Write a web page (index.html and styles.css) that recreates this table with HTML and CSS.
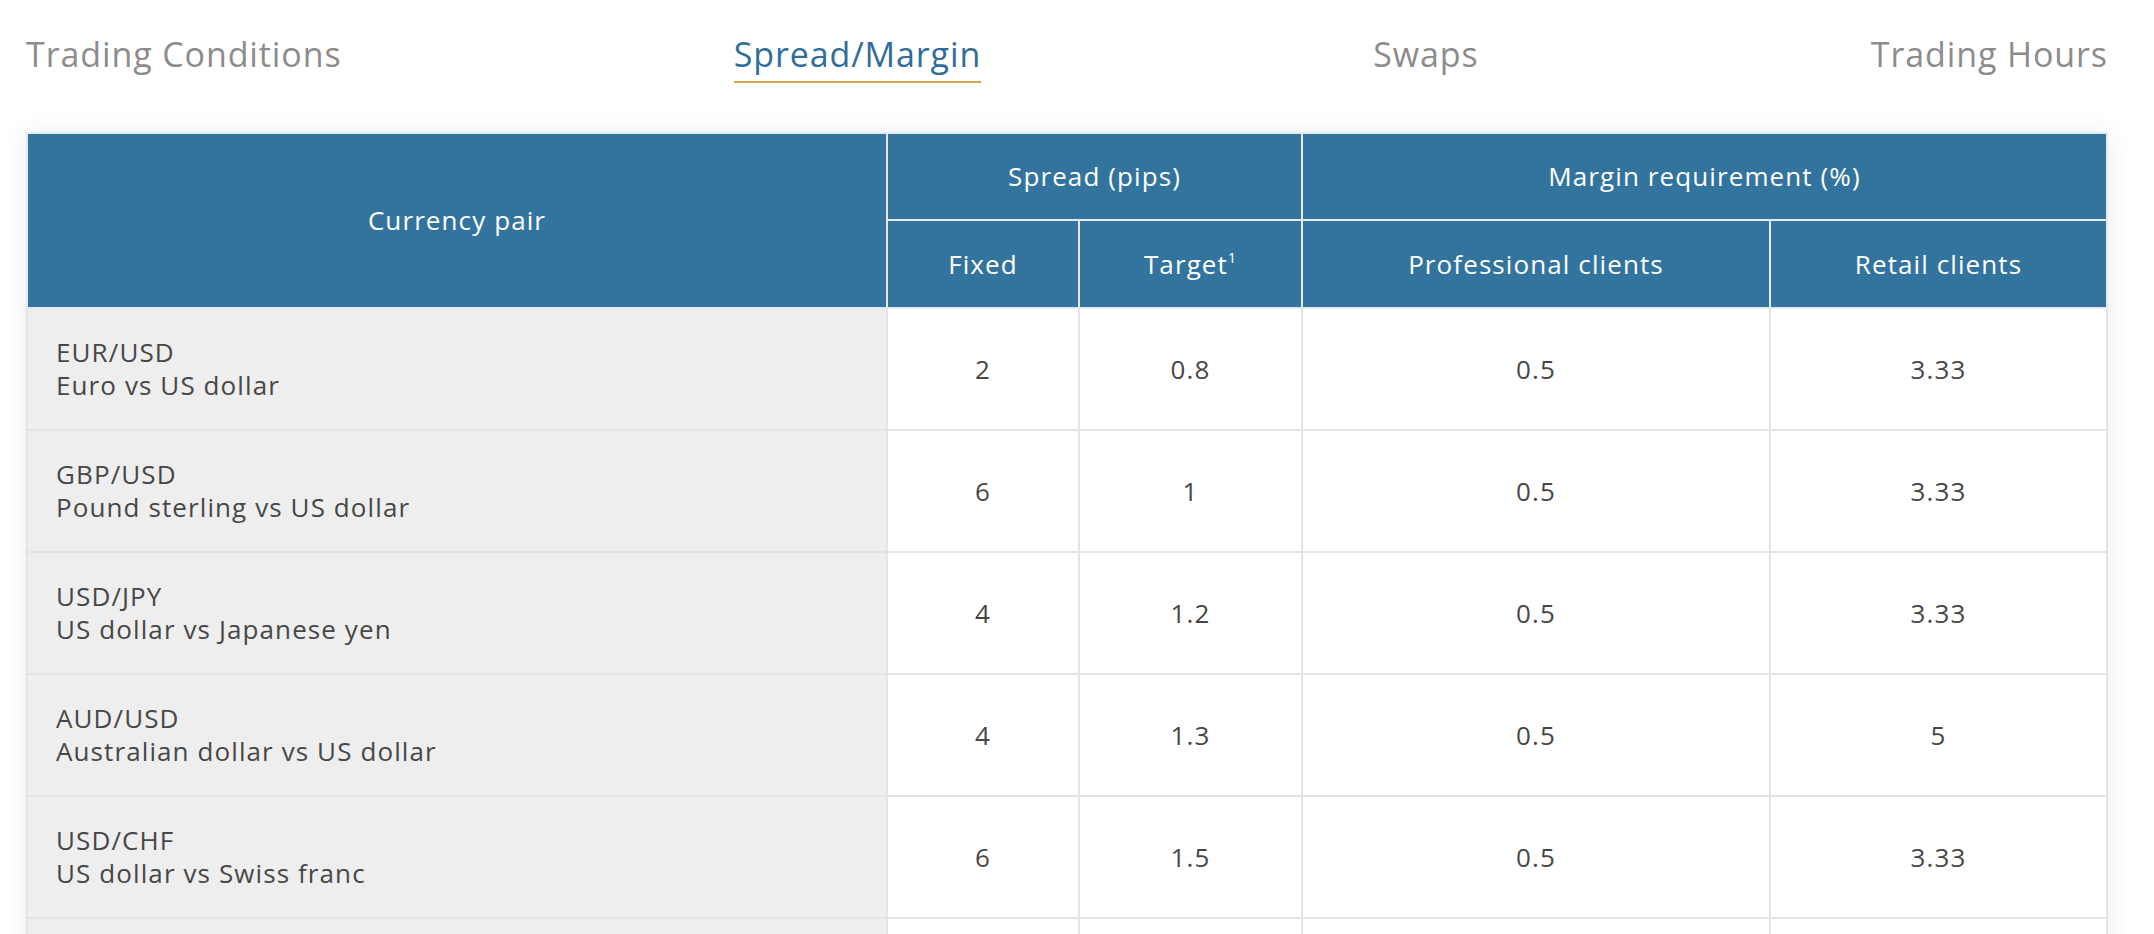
FILE: index.html
```html
<!DOCTYPE html>
<html lang="en">
<head>
<meta charset="utf-8">
<title>Spread/Margin</title>
<link rel="stylesheet" href="styles.css">
</head>
<body>
<div class="page">
  <nav class="tabs">
    <a class="tab">Trading Conditions</a>
    <a class="tab tab-active">Spread/Margin</a>
    <a class="tab">Swaps</a>
    <a class="tab">Trading Hours</a>
  </nav>
  <div class="table-wrap">
    <table class="spread-table">
      <colgroup>
        <col class="c-pair">
        <col class="c-fixed">
        <col class="c-target">
        <col class="c-pro">
        <col class="c-retail">
      </colgroup>
      <thead>
        <tr class="head-top">
          <th rowspan="2">Currency pair</th>
          <th colspan="2">Spread (pips)</th>
          <th colspan="2">Margin requirement (%)</th>
        </tr>
        <tr class="head-sub">
          <th>Fixed</th>
          <th>Target<sup>1</sup></th>
          <th>Professional clients</th>
          <th>Retail clients</th>
        </tr>
      </thead>
      <tbody>
        <tr>
          <td class="pair">EUR/USD<br>Euro vs US dollar</td>
          <td>2</td><td>0.8</td><td>0.5</td><td>3.33</td>
        </tr>
        <tr>
          <td class="pair">GBP/USD<br>Pound sterling vs US dollar</td>
          <td>6</td><td>1</td><td>0.5</td><td>3.33</td>
        </tr>
        <tr>
          <td class="pair">USD/JPY<br>US dollar vs Japanese yen</td>
          <td>4</td><td>1.2</td><td>0.5</td><td>3.33</td>
        </tr>
        <tr>
          <td class="pair">AUD/USD<br>Australian dollar vs US dollar</td>
          <td>4</td><td>1.3</td><td>0.5</td><td>5</td>
        </tr>
        <tr>
          <td class="pair">USD/CHF<br>US dollar vs Swiss franc</td>
          <td>6</td><td>1.5</td><td>0.5</td><td>3.33</td>
        </tr>
        <tr class="row-partial">
          <td class="pair"></td>
          <td></td><td></td><td></td><td></td>
        </tr>
      </tbody>
    </table>
  </div>
</div>
</body>
</html>
```

FILE: styles.css
```css
html, body {
  margin: 0;
  padding: 0;
  background: #ffffff;
}

body {
  font-family: "Open Sans", "Noto Sans", sans-serif;
  color: #474747;
  overflow: hidden;
}

.page {
  width: 2082px;
  margin-left: 26px;
  padding-top: 34px;
}

.tabs {
  display: flex;
  justify-content: space-between;
  align-items: flex-start;
}

.tab {
  display: inline-block;
  font-size: 34px;
  line-height: 40px;
  letter-spacing: 0.9px;
  color: #8c8c8c;
  padding-bottom: 7px;
  border-bottom: 2px solid transparent;
  cursor: pointer;
}

.tab-active {
  color: #2f6d9a;
  border-bottom-color: #d4a54c;
}

.table-wrap {
  margin-top: 49px;
  box-shadow: 0 2px 22px rgba(40, 60, 90, 0.10);
}

.spread-table {
  width: 100%;
  border-collapse: collapse;
  table-layout: fixed;
  font-size: 26px;
  line-height: 33px;
  letter-spacing: 1.1px;
}

.c-pair { width: 860px; }
.c-fixed { width: 192px; }
.c-target { width: 223px; }
.c-pro { width: 468px; }
.c-retail { width: auto; }

.spread-table th {
  background: #33749f;
  color: #ffffff;
  font-weight: 400;
  text-align: center;
  border: 2px solid #e3ebf1;
  padding: 0;
}

.head-top th {
  height: 85px;
}

.head-sub th {
  height: 86px;
}

.spread-table sup {
  font-size: 14px;
  line-height: 0;
  vertical-align: 11px;
}

.spread-table td {
  height: 120px;
  padding: 0;
  text-align: center;
  border: 2px solid #e4e4e4;
  background: #ffffff;
  color: #474747;
}

.spread-table td.pair {
  text-align: left;
  padding-left: 28px;
  background: #eeeeee;
}
```
